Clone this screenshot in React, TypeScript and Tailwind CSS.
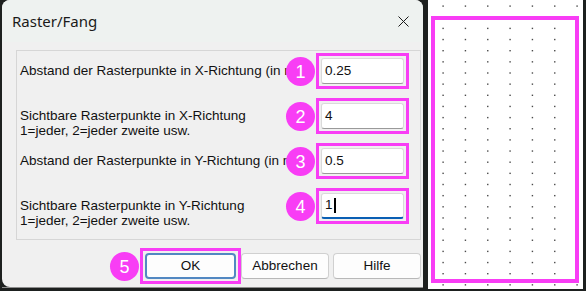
import React from 'react';

const MAGENTA = 'border-[#f83df5]';

function Badge({ n, className }: { n: number; className: string }) {
  return (
    <div
      className={`absolute w-[29px] h-[29px] rounded-full bg-[#f83df5] text-white text-[18px] leading-none flex items-center justify-center ${className}`}
    >
      {n}
    </div>
  );
}

interface RowProps {
  n: number;
  lines: string[];
  value: string;
  focused?: boolean;
}

function FieldRow({ n, lines, value, focused }: RowProps) {
  return (
    <div className="relative flex items-start h-[45px]">
      {/* label is clipped where the badge starts */}
      <div className="w-[270px] mr-[29px] pl-[3px] pt-[10px] leading-[15px] text-[13.5px] text-[#111] whitespace-nowrap overflow-hidden">
        {lines.map((l) => (
          <div key={l}>{l}</div>
        ))}
      </div>
      <div className={`w-[93px] h-[36px] border-[3px] ${MAGENTA} p-[2px]`}>
        <div
          className={`h-full w-full bg-white rounded-[3px] border border-[#dadada] flex items-center pl-[3px] text-[13.5px] text-[#111] ${
            focused ? 'border-b-2 border-b-[#0a5fb4]' : 'border-b-[#9a9a9a]'
          }`}
        >
          {value}
          {focused && <span className="ml-[1px] w-[2px] h-[15px] bg-black" />}
        </div>
      </div>
      <Badge n={n} className="left-[269px] top-[4px]" />
    </div>
  );
}

function DotCanvas() {
  const cols = Array.from({ length: 7 }, (_, i) => 15 + i * 22.33);
  const rows = Array.from({ length: 26 }, (_, j) => 6 + j * 11.15);
  return (
    <div className="relative ml-[5px] w-[155px] h-[289px] bg-white">
      <svg className="absolute inset-0" width="155" height="289">
        {rows.map((y) =>
          cols.map((x) => <rect key={`${x}-${y}`} x={x - 0.6} y={y - 0.6} width="1.4" height="1.4" fill="#4a4a4a" />)
        )}
      </svg>
      <div className={`relative ml-[3px] mt-[16px] w-[148px] h-[267px] border-[4px] ${MAGENTA}`} />
    </div>
  );
}

export default function App() {
  return (
    <div className="w-[586px] h-[291px] bg-[#1d201f] flex overflow-hidden font-['Liberation_Sans',Arial,sans-serif]">
      <div className="ml-[2px] w-[421px] flex flex-col">
        <div className="h-[287px] rounded-t-[8px] rounded-bl-[8px] bg-[#f0f0f0] overflow-hidden flex flex-col">
          <div className="h-[42px] bg-[#eef2f0] flex items-center justify-between pl-[10px] pr-[14px]">
            <span className="font-['Noto_Sans',sans-serif] text-[15px] text-[#1a1a1a]">Raster/Fang</span>
            <svg width="11" height="11" viewBox="0 0 11 11">
              <path d="M0.5 0.5 L10.5 10.5 M10.5 0.5 L0.5 10.5" stroke="#1a1a1a" strokeWidth="1" />
            </svg>
          </div>
          <div className="ml-[14px] mt-[8px] w-[405px] h-[190px] border border-[#d6d6d6] pt-[2px] flex flex-col">
            <FieldRow n={1} lines={['Abstand der Rasterpunkte in X-Richtung (in mm)']} value="0.25" />
            <FieldRow
              n={2}
              lines={['Sichtbare Rasterpunkte in X-Richtung', '1=jeder, 2=jeder zweite usw.']}
              value="4"
            />
            <FieldRow n={3} lines={['Abstand der Rasterpunkte in Y-Richtung (in mm)']} value="0.5" />
            <FieldRow
              n={4}
              lines={['Sichtbare Rasterpunkte in Y-Richtung', '1=jeder, 2=jeder zweite usw.']}
              value="1"
              focused
            />
          </div>
          <div className="relative flex items-start mt-[8px] ml-[138px] text-[13.5px] text-[#111]">
            <div className={`w-[101px] h-[36px] border-[3px] ${MAGENTA} p-[2px]`}>
              <button className="w-full h-full bg-[#fdfdfd] rounded-[4px] border-2 border-[#5288c2]">OK</button>
            </div>
            <button className="mt-[5px] w-[88px] h-[26px] bg-[#fdfdfd] rounded-[4px] border border-[#d0d0d0] border-b-[#b8b8b8]">
              Abbrechen
            </button>
            <button className="ml-[4px] mt-[5px] w-[88px] h-[26px] bg-[#fdfdfd] rounded-[4px] border border-[#d0d0d0] border-b-[#b8b8b8]">
              Hilfe
            </button>
            <Badge n={5} className="-left-[30px] top-[4px]" />
          </div>
        </div>
        <div className="h-[1px] bg-[#8d8d8d]" />
      </div>
      <DotCanvas />
    </div>
  );
}
